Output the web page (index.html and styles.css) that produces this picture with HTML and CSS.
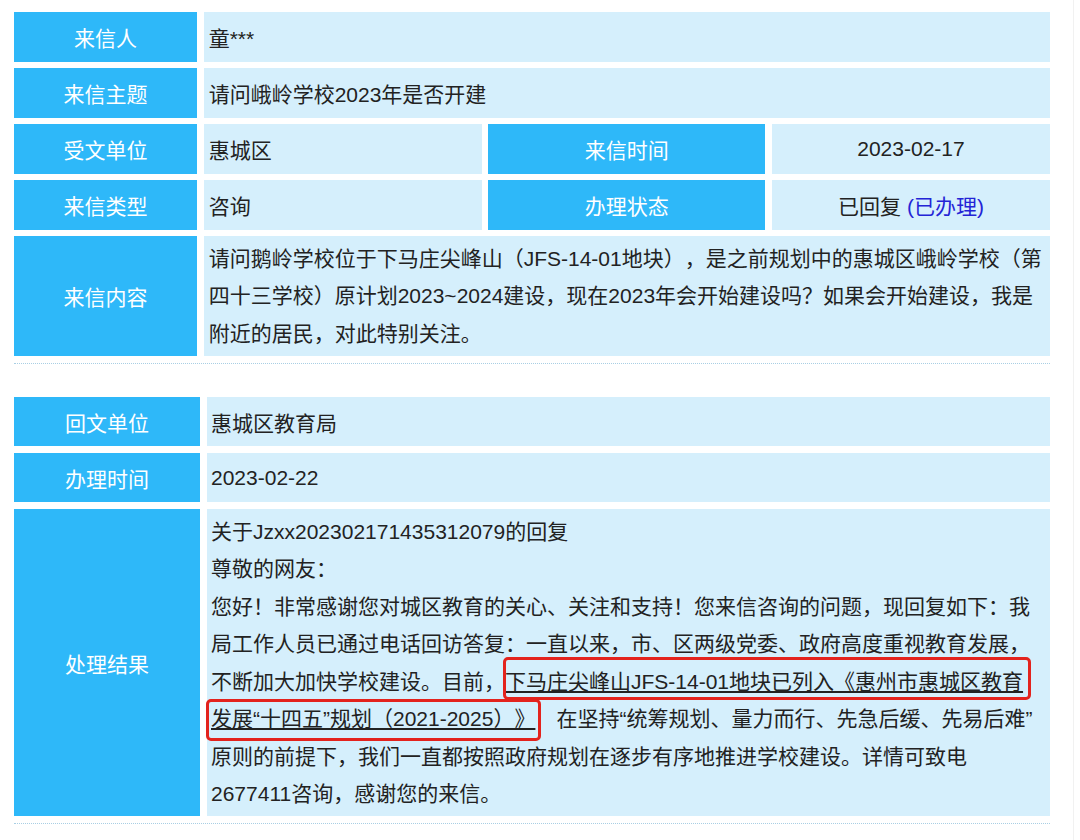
FILE: index.html
```html
<!DOCTYPE html>
<html lang="zh-CN">
<head>
<meta charset="utf-8">
<title>来信详情</title>
<link rel="stylesheet" href="styles.css">
</head>
<body>
<div class="wrap">
  <section class="block">
    <div class="grid letter">
      <div class="lab">来信人</div>
      <div class="val span3">童***</div>
      <div class="lab">来信主题</div>
      <div class="val span3">请问峨岭学校2023年是否开建</div>
      <div class="lab">受文单位</div>
      <div class="val">惠城区</div>
      <div class="lab">来信时间</div>
      <div class="val center">2023-02-17</div>
      <div class="lab">来信类型</div>
      <div class="val">咨询</div>
      <div class="lab">办理状态</div>
      <div class="val center">已回复&nbsp;<span class="status">(已办理)</span></div>
      <div class="lab">来信内容</div>
      <div class="val span3 text">请问鹅岭学校位于下马庄尖峰山（JFS-14-01地块），是之前规划中的惠城区峨岭学校（第四十三学校）原计划2023~2024建设，现在2023年会开始建设吗？如果会开始建设，我是附近的居民，对此特别关注。</div>
    </div>
  </section>

  <section class="block reply-block">
    <div class="grid reply">
      <div class="lab">回文单位</div>
      <div class="val">惠城区教育局</div>
      <div class="lab">办理时间</div>
      <div class="val">2023-02-22</div>
      <div class="lab">处理结果</div>
      <div class="val text answer">关于Jzxx20230217143531​2079的回复<br>尊敬的网友：<br>您好！非常感谢您对城区教育的关心、关注和支持！您来信咨询的问题，现回复如下：我局工作人员已通过电话回访答复：一直以来，市、区两级党委、政府高度重视教育发展，不断加大加快学校建设。目前，<u>下马庄尖峰山JFS-14-01地块已列入《惠州市惠城区教育发展“十四五”规划（2021-2025）》</u>　在坚持“统筹规划、量力而行、先急后缓、先易后难”原则的前提下，我们一直都按照政府规划在逐步有序地推进学校建设。详情可致电2677411咨询，感谢您的来信。<span class="mark mark-a"></span><span class="mark mark-b"></span></div>
    </div>
  </section>
</div>
</body>
</html>
```

FILE: styles.css
```css
html, body {
  margin: 0;
  padding: 0;
  background: #ffffff;
}

body {
  font-family: "Liberation Sans", "Noto Sans CJK SC", sans-serif;
  font-size: 21px;
  color: #222222;
  text-spacing-trim: space-all;
}

.wrap {
  width: 1036px;
  padding: 12px 23px 0 14px;
  border-right: 1px solid #f1f1f1;
  min-height: 828px;
}

.block {
  padding-bottom: 7px;
  border-bottom: 1px dotted #a9cfe4;
}

.reply-block {
  margin-top: 33px;
}

.grid {
  display: grid;
  row-gap: 6px;
  column-gap: 6.67px;
}

.letter {
  grid-template-columns: 183px 278px 277px 278px;
  grid-auto-rows: 50px;
  grid-template-rows: 50px 50px 50px 50px 120px;
}

.reply {
  grid-template-columns: 186px 843px;
  grid-template-rows: 49px 49px 307px;
  row-gap: 7px;
  column-gap: 7px;
}

.lab {
  background: #2eb8f9;
  color: #ffffff;
  display: flex;
  align-items: center;
  justify-content: center;
}

.val {
  background: #d5effc;
  display: flex;
  align-items: center;
  padding: 0 4px 0 5px;
}

.span3 {
  grid-column: span 3;
}

.center {
  justify-content: center;
  padding: 0;
}

.status {
  color: #2424d6;
}

.text {
  display: block;
  line-height: 37.5px;
  padding-top: 3.75px;
  padding-bottom: 0;
}

.reply .val {
  padding: 0 12px 0 4px;
}

.reply .answer {
  position: relative;
  padding-top: 3.5px;
}

u {
  text-decoration: underline;
  text-underline-offset: 2px;
}

.mark {
  position: absolute;
  box-sizing: border-box;
  border: 3px solid #e3231d;
  border-radius: 5px;
  pointer-events: none;
}

.mark-a {
  left: 296px;
  top: 148px;
  width: 528px;
  height: 43px;
}

.mark-b {
  left: -1px;
  top: 190px;
  width: 335px;
  height: 42px;
}
```
